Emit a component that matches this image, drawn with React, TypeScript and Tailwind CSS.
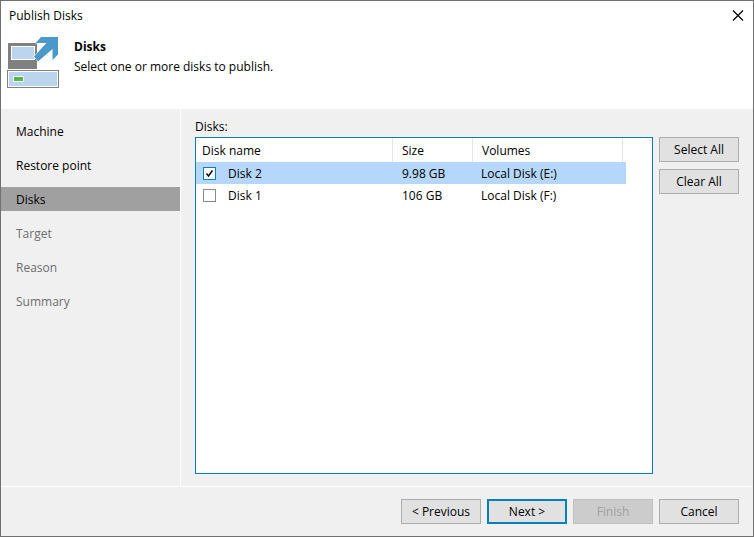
import { useState, type ButtonHTMLAttributes } from "react";

const steps = [
  { name: "Machine", state: "done" },
  { name: "Restore point", state: "done" },
  { name: "Disks", state: "current" },
  { name: "Target", state: "pending" },
  { name: "Reason", state: "pending" },
  { name: "Summary", state: "pending" },
];

const stepStyles: Record<string, string> = {
  done: "text-black",
  current: "bg-[#a0a0a0] text-black",
  pending: "text-[#6d6d6d]",
};

const disks = [
  { name: "Disk 2", size: "9.98 GB", volumes: "Local Disk (E:)" },
  { name: "Disk 1", size: "106 GB", volumes: "Local Disk (F:)" },
];

function PublishIcon() {
  return (
    <svg width="54" height="54" viewBox="0 0 54 54" aria-hidden="true" shapeRendering="crispEdges">
      <rect x="2" y="7" width="29" height="26" fill="#808080" />
      <rect x="5" y="10" width="24" height="14" fill="#fff" />
      <rect x="6" y="11" width="22" height="12" fill="#bbd5ef" />
      <rect x="1" y="34" width="52" height="18" fill="#808080" />
      <rect x="2" y="35" width="50" height="16" fill="#fff" />
      <rect x="3" y="36" width="48" height="14" fill="#bbd5ef" />
      <rect x="7" y="40" width="11" height="6" fill="#fff" />
      <rect x="8" y="41" width="9" height="4" fill="#55b748" />
      <path
        d="M35 1H52V18.500L46.500 24V13L32 25.500L28 20.500L40.500 7H29.500Z"
        fill="#4b98ca"
        stroke="#fff"
        strokeWidth="1"
        paintOrder="stroke"
        shapeRendering="auto"
      />
    </svg>
  );
}

function Button({ primary, ...props }: ButtonHTMLAttributes<HTMLButtonElement> & { primary?: boolean }) {
  return (
    <button
      type="button"
      className={`h-[25px] w-20 shrink-0 text-center leading-4 text-black disabled:border disabled:border-[#bfbfbf] disabled:bg-[#cccccc] disabled:text-[#a0a0a0] ${
        primary ? "border-2 border-[#0580b8] bg-[#e1e1e1]" : "border border-[#adadad] bg-[#e1e1e1]"
      }`}
      {...props}
    />
  );
}

export default function App() {
  const [checked, setChecked] = useState([true, false]);
  const [selected, setSelected] = useState(0);

  return (
    <div className="flex h-screen flex-col border border-[#707070] bg-[#f0f0f0] font-['Open_Sans','Noto_Sans',sans-serif] text-[12px] leading-4 text-black">
      <header className="h-[108px] shrink-0 bg-white">
        <div className="flex h-[30px] items-center justify-between pr-[7px] pl-2">
          <h1>Publish Disks</h1>
          <button type="button" aria-label="Close" className="flex size-4 items-center justify-center">
            <svg width="12" height="12" viewBox="0 0 12 12" aria-hidden="true">
              <path d="M1 0.500L11 10.500M11 0.500L1 10.500" stroke="#000" strokeWidth="1.200" />
            </svg>
          </button>
        </div>
        <div className="flex pl-[5px]">
          <div className="pt-[5px]">
            <PublishIcon />
          </div>
          <div className="pt-2 pl-[14px]">
            <h2 className="font-bold">Disks</h2>
            <p className="pt-1">Select one or more disks to publish.</p>
          </div>
        </div>
      </header>

      <div className="flex min-h-0 flex-1">
        <nav aria-label="Wizard steps" className="w-[180px] shrink-0 border-r border-white pt-[10px]">
          <ol className="flex flex-col gap-[10px]">
            {steps.map((step) => (
              <li
                key={step.name}
                aria-current={step.state === "current" ? "step" : undefined}
                className={`flex h-6 items-center pt-[2px] pl-[15px] ${stepStyles[step.state]}`}
              >
                {step.name}
              </li>
            ))}
          </ol>
        </nav>

        <main className="flex min-w-0 flex-1 flex-col pt-[10px] pr-[14px] pb-3 pl-[14px]">
          <h3 id="disks-label" className="h-[18px]">
            Disks:
          </h3>
          <div className="flex min-h-0 flex-1 gap-[6px]">
            <div className="min-w-0 flex-1 border border-[#0580b8] bg-white">
              <table aria-labelledby="disks-label" className="w-[430px] table-fixed border-separate border-spacing-0 text-left">
                <colgroup>
                  <col className="w-[197px]" />
                  <col className="w-20" />
                  <col className="w-[150px]" />
                  <col className="w-[3px]" />
                </colgroup>
                <thead>
                  <tr className="h-6">
                    <th className="border-r border-[#e5e5e5] p-0 pt-[2px] pl-[6px] font-normal">Disk name</th>
                    <th className="border-r border-[#e5e5e5] p-0 pt-[2px] pl-[9px] font-normal">Size</th>
                    <th className="border-r border-[#e5e5e5] p-0 pt-[2px] pl-[9px] font-normal">Volumes</th>
                    <td className="p-0" />
                  </tr>
                </thead>
                <tbody>
                  {disks.map((disk, i) => (
                    <tr
                      key={disk.name}
                      onClick={() => setSelected(i)}
                      className={`h-[22px] ${i === selected ? "bg-[#b5d7fb]" : ""}`}
                    >
                      <td className="p-0 pt-[2px] pl-[7px]">
                        <label className="flex items-center gap-3">
                          <span className="grid h-4 w-[13px] items-start pt-px">
                            <input
                              type="checkbox"
                              checked={checked[i]}
                              onChange={() => setChecked(checked.map((c, j) => (j === i ? !c : c)))}
                              className="col-start-1 row-start-1 size-[13px] appearance-none border border-[#8a8a8a] bg-white checked:border-[#0580b8]"
                            />
                            {checked[i] && (
                              <svg
                                viewBox="0 0 13 13"
                                aria-hidden="true"
                                className="pointer-events-none col-start-1 row-start-1 size-[13px]"
                              >
                                <path d="M3.500 6.500L5.500 9L9.500 3.500" fill="none" stroke="#111" strokeWidth="1.600" />
                              </svg>
                            )}
                          </span>
                          {disk.name}
                        </label>
                      </td>
                      <td className="p-0 pt-[2px] pl-[9px]">{disk.size}</td>
                      <td className="p-0 pt-[2px] pl-2">{disk.volumes}</td>
                      <td className="p-0" />
                    </tr>
                  ))}
                </tbody>
              </table>
            </div>
            <div className="flex flex-col gap-[7px]">
              <Button onClick={() => setChecked([true, true])}>Select All</Button>
              <Button onClick={() => setChecked([false, false])}>Clear All</Button>
            </div>
          </div>
        </main>
      </div>

      <footer className="flex h-[50px] shrink-0 justify-end gap-[6px] border-t border-white pt-3 pr-[14px]">
        <Button>&lt; Previous</Button>
        <Button primary>Next &gt;</Button>
        <Button disabled>Finish</Button>
        <Button>Cancel</Button>
      </footer>
    </div>
  );
}
